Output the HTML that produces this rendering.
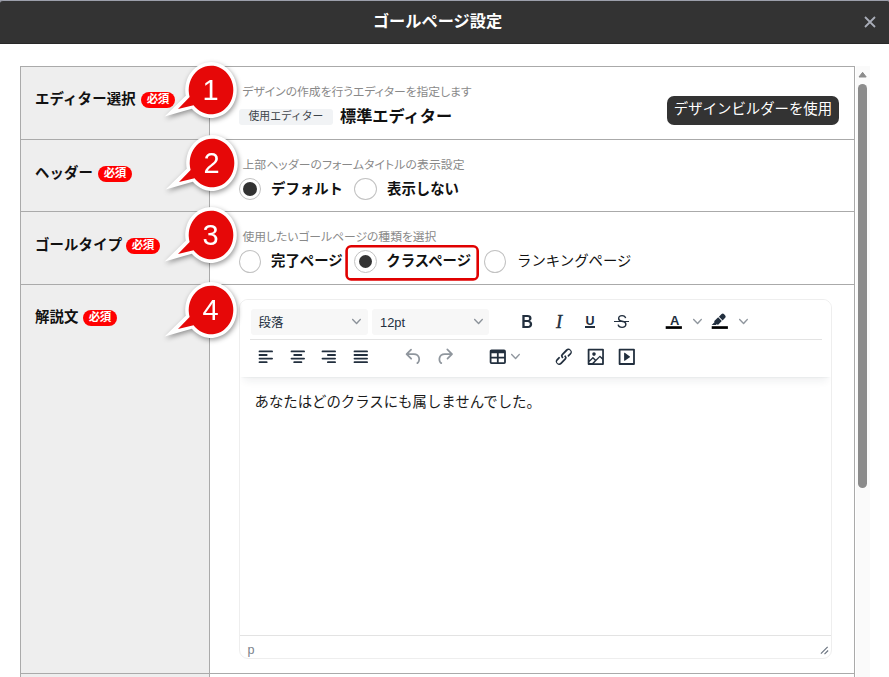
<!DOCTYPE html>
<html lang="ja">
<head>
<meta charset="utf-8">
<title>ゴールページ設定</title>
<style>
*{box-sizing:border-box;margin:0;padding:0}
html,body{width:889px;height:677px;overflow:hidden;background:#fff}
body{position:relative;font-family:"Liberation Sans","Noto Sans CJK JP",sans-serif;color:#111;font-size:14px;line-height:1}
.abs{position:absolute;white-space:nowrap}
#hdr{left:0;top:0;width:889px;height:44px;background:#333;border-top:1px solid #9c9fab;border-bottom:1px solid #282828;border-radius:3px 2px 0 0}
#title{left:0;top:0;width:875px;height:44px;line-height:43px;text-align:center;color:#fff;font-weight:700;font-size:16.2px}
#close{left:862px;top:14px;width:16px;height:16px}
#tbl{left:20px;top:66px;width:835px;height:620px;border:1px solid #aaa;background:#fff}
.lab{left:21px;width:188px;background:#eee}
.hl{left:21px;width:833px;height:1px;background:#aaa}
#vl{left:209px;top:67px;width:1px;height:620px;background:#aaa}
#sbt{left:856px;top:66px;width:14px;height:611px;background:#fafafa}
#sbth{left:858px;top:84px;width:9px;height:404px;background:#8b8b8b;border-radius:5px}
.lt{left:35px;font-weight:700;font-size:14.4px;color:#111;line-height:20px;height:20px;letter-spacing:.15px}
.req{height:16px;width:34px;border-radius:8px;background:#f00;color:#fff;font-size:11.5px;font-weight:700;line-height:15.5px;text-align:center;letter-spacing:-.4px;padding-right:.4px}
.desc{left:242.4px;font-size:11.8px;color:#898989;line-height:16px;height:16px;font-weight:400;font-feature-settings:"palt";margin-top:.7px}
.rl{font-weight:700;font-size:14.4px;line-height:20px;height:20px;color:#111}
.radio{width:22px;height:22px;border-radius:50%;border:1px solid #c2c2c2;background:#fff}
.radio.on::after{content:"";position:absolute;left:3px;top:3px;width:14px;height:14px;border-radius:50%;background:#333}
.radio.r13::after{left:4px;top:4px;width:13px;height:13px}
#tag{left:239px;top:109px;width:94px;height:16px;border-radius:3px;background:#f1f3f5;color:#3d444b;font-size:10.8px;line-height:15px;text-align:center}
#std{left:340px;top:104px;font-size:16.2px;font-weight:700;line-height:24px;color:#111}
#btn{left:667px;top:96px;width:172px;height:29px;border-radius:7px;background:#333;color:#fff;font-size:14.4px;line-height:27px;text-align:center}
#redbox{left:345px;top:245px;width:134px;height:35.5px;border:2.4px solid #e00000;border-radius:6px}
#ed{left:239px;top:299px;width:593px;height:360px;border:1px solid #eee;border-radius:9px;background:#fff;overflow:hidden}
#tb{left:0;top:0;width:591px;height:77px;background:#fff;box-shadow:0 2px 2px -2px rgba(34,47,62,.1),0 8px 8px -4px rgba(34,47,62,.07)}
.sel{top:309px;width:117px;height:26px;border-radius:3px;background:#f7f7f7;color:#222f3e;font-size:12.4px;line-height:28px;padding-left:7.5px}
#tdiv{left:250px;top:339px;width:572px;height:1px;background:#e3e3e3}
#sdiv{left:240px;top:635px;width:591px;height:1px;background:#e3e3e3}
#ptag{left:247.5px;top:641.5px;font-size:12.6px;line-height:16px;color:#7b838c}
#txt{left:254.5px;top:392px;font-size:14.4px;line-height:21px;color:#1a1a1a}
.tbi{top:310px;width:22px;height:23px;line-height:23px;text-align:center;color:#222f3e;font-size:16px}
.co{filter:drop-shadow(1.5px 2px 2.5px rgba(0,0,0,.4))}
</style>
</head>
<body>
<div class="abs" style="left:0;top:0;width:889px;height:4px;background:#9c9fab"></div>
<div id="hdr" class="abs"></div>
<div id="title" class="abs">ゴールページ設定</div>
<svg id="close" class="abs" viewBox="0 0 16 16"><path d="M3 3 L13 13 M13 3 L3 13" stroke="#a9adb8" stroke-width="1.8" fill="none"/></svg>

<div id="tbl" class="abs"></div>
<div class="abs lab" style="top:67px;height:610px"></div>
<div class="abs hl" style="top:139px"></div>
<div class="abs hl" style="top:211px"></div>
<div class="abs hl" style="top:284px"></div>
<div class="abs hl" style="top:673px"></div>
<div id="vl" class="abs"></div>
<div id="sbt" class="abs"></div>
<svg class="abs" style="left:856px;top:70px" width="14" height="10" viewBox="0 0 14 10"><path d="M3 7 L6.6 2.3 L10.2 7 Z" fill="#8b8b8b" stroke="#8b8b8b" stroke-width="1" stroke-linejoin="round"/></svg>
<div id="sbth" class="abs"></div>

<div class="abs lt" style="top:89px">エディター選択</div>
<div class="abs req" style="left:141px;top:92px">必須</div>
<div class="abs lt" style="top:163px">ヘッダー</div>
<div class="abs req" style="left:98px;top:166px">必須</div>
<div class="abs lt" style="top:235px">ゴールタイプ</div>
<div class="abs req" style="left:126px;top:238px">必須</div>
<div class="abs lt" style="top:307px">解説文</div>
<div class="abs req" style="left:83px;top:310px">必須</div>

<div class="abs desc" style="top:83px">デザインの作成を行うエディターを指定します</div>
<div id="tag" class="abs">使用エディター</div>
<div id="std" class="abs">標準エディター</div>
<div id="btn" class="abs">デザインビルダーを使用</div>

<div class="abs desc" style="top:156px;letter-spacing:.15px">上部ヘッダーのフォームタイトルの表示設定</div>
<div class="abs radio on" style="left:239px;top:178px;width:22px;height:22px"></div>
<div class="abs rl" style="left:271px;top:179px">デフォルト</div>
<div class="abs radio" style="left:354px;top:178px;width:23px;height:22px"></div>
<div class="abs rl" style="left:387px;top:179px">表示しない</div>

<div class="abs desc" style="top:228.3px">使用したいゴールページの種類を選択</div>
<div class="abs radio" style="left:239px;top:250px;width:22px;height:23px"></div>
<div class="abs rl" style="left:271px;top:251px">完了ページ</div>
<svg class="abs" style="left:340px;top:240px" width="146" height="46" viewBox="340 240 146 46"><rect x="346.6" y="246.3" width="131.1" height="33.1" rx="4.5" ry="4.5" fill="none" stroke="#e00000" stroke-width="2.6"/></svg>
<div class="abs radio on r13" style="left:354px;top:250px;width:23px;height:23px"></div>
<div class="abs rl" style="left:386.3px;top:251px">クラスページ</div>
<div class="abs radio" style="left:484px;top:250px;width:22px;height:23px"></div>
<div class="abs rl" style="left:517px;top:251px;font-weight:400">ランキングページ</div>

<div id="ed" class="abs"><div id="tb" class="abs"></div></div>
<div class="abs sel" style="left:251px">段落</div>
<div class="abs sel" style="left:372px;font-size:12.9px;padding-left:8px">12pt</div>
<div id="tdiv" class="abs"></div>
<div class="abs tbi" style="left:516px;top:311.2px;font-weight:700;font-size:17.5px;transform:scaleX(.92)">B</div>
<div class="abs tbi" style="left:548px;top:310.5px;font-family:'Liberation Serif',serif;font-style:italic;font-size:18.5px;-webkit-text-stroke:.35px #222f3e">I</div>
<div class="abs tbi" style="left:579px;top:309.5px;font-size:12.5px;font-weight:700">U</div><div class="abs" style="left:585.3px;top:326.3px;width:9.4px;height:1.4px;background:#222f3e"></div>
<div class="abs tbi" style="left:610.5px;top:310.8px;font-size:17.5px;transform:scaleX(.9)">S</div><div class="abs" style="left:614.3px;top:321px;width:14.6px;height:1.4px;background:#222f3e"></div>
<div class="abs tbi" style="left:663.7px;top:309px;font-size:13px;font-weight:700">A</div>
<svg class="abs" style="left:255.1px;top:346.0px" width="21.6" height="21.6" viewBox="0 0 24 24" fill="#222f3e" ><path d="M5 5h14c.6 0 1 .4 1 1s-.4 1-1 1H5a1 1 0 1 1 0-2Zm0 4h8c.6 0 1 .4 1 1s-.4 1-1 1H5a1 1 0 1 1 0-2Zm0 8h8c.6 0 1 .4 1 1s-.4 1-1 1H5a1 1 0 0 1 0-2Zm0-4h14c.6 0 1 .4 1 1s-.4 1-1 1H5a1 1 0 0 1 0-2Z" fill-rule="evenodd"/></svg>
<svg class="abs" style="left:286.6px;top:346.0px" width="21.6" height="21.6" viewBox="0 0 24 24" fill="#222f3e" ><path d="M5 5h14c.6 0 1 .4 1 1s-.4 1-1 1H5a1 1 0 1 1 0-2Zm3 4h8c.6 0 1 .4 1 1s-.4 1-1 1H8a1 1 0 1 1 0-2Zm0 8h8c.6 0 1 .4 1 1s-.4 1-1 1H8a1 1 0 0 1 0-2Zm-3-4h14c.6 0 1 .4 1 1s-.4 1-1 1H5a1 1 0 0 1 0-2Z" fill-rule="evenodd"/></svg>
<svg class="abs" style="left:318.1px;top:346.0px" width="21.6" height="21.6" viewBox="0 0 24 24" fill="#222f3e" ><path d="M5 5h14c.6 0 1 .4 1 1s-.4 1-1 1H5a1 1 0 1 1 0-2Zm6 4h8c.6 0 1 .4 1 1s-.4 1-1 1h-8a1 1 0 0 1 0-2Zm0 8h8c.6 0 1 .4 1 1s-.4 1-1 1h-8a1 1 0 0 1 0-2Zm-6-4h14c.6 0 1 .4 1 1s-.4 1-1 1H5a1 1 0 0 1 0-2Z" fill-rule="evenodd"/></svg>
<svg class="abs" style="left:349.6px;top:346.0px" width="21.6" height="21.6" viewBox="0 0 24 24" fill="#222f3e" ><path d="M5 5h14c.6 0 1 .4 1 1s-.4 1-1 1H5a1 1 0 1 1 0-2Zm0 4h14c.6 0 1 .4 1 1s-.4 1-1 1H5a1 1 0 1 1 0-2Zm0 4h14c.6 0 1 .4 1 1s-.4 1-1 1H5a1 1 0 0 1 0-2Zm0 4h14c.6 0 1 .4 1 1s-.4 1-1 1H5a1 1 0 0 1 0-2Z" fill-rule="evenodd"/></svg>
<svg class="abs" style="left:402.7px;top:346.0px" width="21.6" height="21.6" viewBox="0 0 24 24" fill="#222f3e" opacity="0.5"><path d="M6.4 8H12c3.700 0 6.200 2 6.800 5.100.6 2.700-.4 5.600-2.300 6.800a1 1 0 0 1-1-1.800c1.100-.6 1.800-2.700 1.400-4.600-.5-2.100-2.100-3.500-4.900-3.500H6.400l3.300 3.300a1 1 0 1 1-1.400 1.400l-5-5a1 1 0 0 1 0-1.400l5-5a1 1 0 0 1 1.400 1.400L6.400 8Z" fill-rule="evenodd"/></svg>
<svg class="abs" style="left:433.9px;top:346.0px" width="21.6" height="21.6" viewBox="0 0 24 24" fill="#222f3e" opacity="0.5"><path d="M17.600 10H12c-2.800 0-4.400 1.400-4.900 3.500-.4 2 .3 4 1.400 4.600a1 1 0 1 1-1 1.800c-2-1.200-2.900-4.100-2.300-6.800.6-3 3-5.100 6.800-5.100h5.600l-3.300-3.300a1 1 0 1 1 1.400-1.400l5 5a1 1 0 0 1 0 1.400l-5 5a1 1 0 0 1-1.400-1.400l3.300-3.300Z" fill-rule="evenodd"/></svg>
<svg class="abs" style="left:486.8px;top:345.7px" width="21.6" height="21.6" viewBox="0 0 24 24" fill="#222f3e" ><path d="M19 4a2 2 0 0 1 2 2v12a2 2 0 0 1-2 2H5a2 2 0 0 1-2-2V6c0-1.100.9-2 2-2h14ZM5 14v4h6v-4H5Zm14 0h-6v4h6v-4Zm0-6h-6v4h6V8ZM5 12h6V8H5v4Z" fill-rule="evenodd"/></svg>
<svg class="abs" style="left:511.0px;top:352.0px" width="9" height="9" viewBox="0 0 10 10" fill="#222f3e" opacity="0.5"><path d="M8.7 2.2c.3-.3.8-.3 1 0 .4.400.4.900 0 1.200L5.700 7.800c-.3.300-.9.300-1.200 0L.2 3.400a.8.800 0 0 1 0-1.200c.3-.3.800-.3 1.100 0L5 6l3.700-3.800Z"/></svg>
<svg class="abs" style="left:552.7px;top:346.0px" width="21.6" height="21.6" viewBox="0 0 24 24" fill="#222f3e" ><path d="M6.200 12.300a1 1 0 0 1 1.400 1.400l-2 2a2 2 0 1 0 2.600 2.800l4.800-4.800a1 1 0 0 0 0-1.400 1 1 0 1 1 1.400-1.300 2.900 2.900 0 0 1 0 4L9.600 20a3.900 3.900 0 0 1-5.500-5.500l2-2Zm11.600-.6a1 1 0 0 1-1.400-1.400l2-2a2 2 0 1 0-2.600-2.800L11 10.300a1 1 0 0 0 0 1.400A1 1 0 1 1 9.600 13a2.900 2.900 0 0 1 0-4L14.400 4a3.900 3.900 0 0 1 5.500 5.500l-2 2Z" fill-rule="evenodd"/></svg>
<svg class="abs" style="left:585.1px;top:346.0px" width="21.6" height="21.6" viewBox="0 0 24 24" fill="#222f3e" ><path d="m5 15.700 3.300-3.200c.3-.3.700-.3 1 0L12 15l4.100-4c.3-.4.800-.4 1 0l2 1.900V5H5v10.700ZM5 18V19h3l2.800-2.900-2-2L5 17.900Zm14-3-2.500-2.400-6.400 6.500H19v-4ZM4 3h16c.6 0 1 .4 1 1v16c0 .6-.4 1-1 1H4a1 1 0 0 1-1-1V4c0-.6.4-1 1-1Zm6 8a2 2 0 1 0 0-4 2 2 0 0 0 0 4Z" fill-rule="evenodd"/></svg>
<svg class="abs" style="left:616.3px;top:346.0px" width="21.6" height="21.6" viewBox="0 0 24 24" fill="#222f3e" ><path d="M4 3h16c.6 0 1 .4 1 1v16c0 .6-.4 1-1 1H4a1 1 0 0 1-1-1V4c0-.6.4-1 1-1Zm1 2v14h14V5H5Zm4.800 2.600 5.600 4a.5.500 0 0 1 0 .8l-5.600 4A.5.500 0 0 1 9 16V8a.5.500 0 0 1 .8-.4Z" fill-rule="evenodd"/></svg>
<svg class="abs" style="left:663.1px;top:310.3px" width="21.6" height="21.6" viewBox="0 0 24 24" fill="#222f3e" ><path d="M3 18h18v3H3z" fill="#000"/></svg>
<svg class="abs" style="left:693.1px;top:317.1px" width="9" height="9" viewBox="0 0 10 10" fill="#222f3e" opacity="0.5"><path d="M8.7 2.2c.3-.3.8-.3 1 0 .4.400.4.900 0 1.200L5.700 7.800c-.3.300-.9.300-1.200 0L.2 3.400a.8.800 0 0 1 0-1.200c.3-.3.800-.3 1.100 0L5 6l3.700-3.800Z"/></svg>
<svg class="abs" style="left:709.1px;top:310.3px" width="21.6" height="21.6" viewBox="0 0 24 24" fill="#222f3e" ><path d="M3 18h18v3H3z" fill="#000"/><path d="M7.700 16.700H3l3.300-3.300-.7-.8L10.200 8l4 4.100-4 4.200c-.2.200-.6.200-.8 0l-.6-.7-1.100 1.100zm5-7.500L11 7.400l3-2.900a2 2 0 0 1 2.600 0L18 6c.7.700.7 2 0 2.700l-2.900 2.900-1.800-1.800-.5-.6" fill-rule="evenodd"/></svg>
<svg class="abs" style="left:739.0px;top:317.1px" width="9" height="9" viewBox="0 0 10 10" fill="#222f3e" opacity="0.5"><path d="M8.7 2.2c.3-.3.8-.3 1 0 .4.400.4.900 0 1.200L5.700 7.800c-.3.300-.9.300-1.200 0L.2 3.400a.8.800 0 0 1 0-1.200c.3-.3.800-.3 1.100 0L5 6l3.700-3.800Z"/></svg>
<svg class="abs" style="left:352.0px;top:317.1px" width="9" height="9" viewBox="0 0 10 10" fill="#222f3e" opacity="0.5"><path d="M8.7 2.2c.3-.3.8-.3 1 0 .4.400.4.900 0 1.200L5.700 7.800c-.3.300-.9.300-1.200 0L.2 3.400a.8.800 0 0 1 0-1.200c.3-.3.800-.3 1.100 0L5 6l3.700-3.800Z"/></svg>
<svg class="abs" style="left:473.6px;top:317.1px" width="9" height="9" viewBox="0 0 10 10" fill="#222f3e" opacity="0.5"><path d="M8.7 2.2c.3-.3.8-.3 1 0 .4.400.4.900 0 1.200L5.700 7.800c-.3.300-.9.300-1.200 0L.2 3.400a.8.800 0 0 1 0-1.200c.3-.3.800-.3 1.100 0L5 6l3.700-3.800Z"/></svg>
<div id="txt" class="abs">あなたはどのクラスにも属しませんでした。</div>
<div id="sdiv" class="abs"></div>
<div id="ptag" class="abs">p</div>
<svg class="abs" style="left:820px;top:646px" width="9" height="9" viewBox="0 0 10 10"><path d="M1 8.500 L8.500 1 M5 9 L9 5" stroke="#6b7480" stroke-width="1.3" fill="none"/></svg>

<svg class="abs co" style="left:151.0px;top:48.0px" width="110" height="90" viewBox="-60 -42 110 90">
<path d="M-25.24 5.80L-46.4 26.5L-19.17 18.67A25.8 27.9 0 1 0 -25.24 5.80Z" fill="#fff"/>
<path d="M-21.38 6.90L-33.0 18.9L-17.45 15.13A22.3 24.3 0 1 0 -21.38 6.90Z" fill="#e60808"/>
<text x="-0.5" y="10.2" text-anchor="middle" font-family="Liberation Sans, sans-serif" font-size="29" fill="#fff">1</text>
</svg>
<svg class="abs co" style="left:151.5px;top:121.0px" width="110" height="90" viewBox="-60 -42 110 90">
<path d="M-25.24 5.80L-46.4 26.5L-19.17 18.67A25.8 27.9 0 1 0 -25.24 5.80Z" fill="#fff"/>
<path d="M-21.38 6.90L-33.0 18.9L-17.45 15.13A22.3 24.3 0 1 0 -21.38 6.90Z" fill="#e60808"/>
<text x="-0.5" y="10.2" text-anchor="middle" font-family="Liberation Sans, sans-serif" font-size="29" fill="#fff">2</text>
</svg>
<svg class="abs co" style="left:150.8px;top:192.8px" width="110" height="90" viewBox="-60 -42 110 90">
<path d="M-25.24 5.80L-46.4 26.5L-19.17 18.67A25.8 27.9 0 1 0 -25.24 5.80Z" fill="#fff"/>
<path d="M-21.38 6.90L-33.0 18.9L-17.45 15.13A22.3 24.3 0 1 0 -21.38 6.90Z" fill="#e60808"/>
<text x="-0.5" y="10.2" text-anchor="middle" font-family="Liberation Sans, sans-serif" font-size="29" fill="#fff">3</text>
</svg>
<svg class="abs co" style="left:151.0px;top:267.6px" width="110" height="90" viewBox="-60 -42 110 90">
<path d="M-25.24 5.80L-46.4 26.5L-19.17 18.67A25.8 27.9 0 1 0 -25.24 5.80Z" fill="#fff"/>
<path d="M-21.38 6.90L-33.0 18.9L-17.45 15.13A22.3 24.3 0 1 0 -21.38 6.90Z" fill="#e60808"/>
<text x="-0.5" y="10.2" text-anchor="middle" font-family="Liberation Sans, sans-serif" font-size="29" fill="#fff">4</text>
</svg>
</body>
</html>
